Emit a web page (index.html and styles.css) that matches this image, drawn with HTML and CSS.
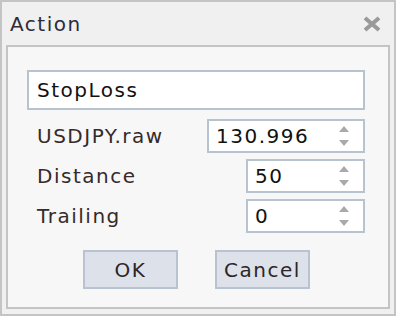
FILE: index.html
```html
<!DOCTYPE html>
<html lang="en">
<head>
    <meta charset="UTF-8">
    <title>Action</title>
    <link rel="stylesheet" href="styles.css">
</head>
<body>
    <div class="window">
        <div class="title-bar">
            <span class="title">Action</span>
            <svg class="close" width="18" height="16" viewBox="0 0 18 16">
                <path d="M2 2 L16 14 M16 2 L2 14" stroke="#999" stroke-width="4"/>
            </svg>
        </div>

        <div class="panel">
            <div class="name-box">StopLoss</div>

            <div class="row">
                <span class="label">USDJPY.raw</span>
                <div class="spin wide">
                    <span>130.996</span>
                    <svg class="arrows" width="14" height="24" viewBox="0 0 14 24">
                        <path d="M7 2 L12 8 L2 8 Z" fill="#aaa"/>
                        <path d="M7 22 L12 16 L2 16 Z" fill="#aaa"/>
                    </svg>
                </div>
            </div>

            <div class="row">
                <span class="label">Distance</span>
                <div class="spin">
                    <span>50</span>
                    <svg class="arrows" width="14" height="24" viewBox="0 0 14 24">
                        <path d="M7 2 L12 8 L2 8 Z" fill="#aaa"/>
                        <path d="M7 22 L12 16 L2 16 Z" fill="#aaa"/>
                    </svg>
                </div>
            </div>

            <div class="row">
                <span class="label">Trailing</span>
                <div class="spin">
                    <span>0</span>
                    <svg class="arrows" width="14" height="24" viewBox="0 0 14 24">
                        <path d="M7 2 L12 8 L2 8 Z" fill="#aaa"/>
                        <path d="M7 22 L12 16 L2 16 Z" fill="#aaa"/>
                    </svg>
                </div>
            </div>

            <div class="buttons">
                <button>OK</button>
                <button>Cancel</button>
            </div>
        </div>
    </div>
</body>
</html>
```

FILE: styles.css
```css
* {
    margin: 0;
    padding: 0;
    box-sizing: border-box;
    font-family: 'DejaVu Sans', Verdana, sans-serif;
}

body {
    background: #f0f0f0;
}

.window {
    width: 396px;
    height: 316px;
    border: 2px solid #c4c4c4;
    background: #f0f0f0;
    display: flex;
    flex-direction: column;
}

.title-bar {
    height: 43px;
    display: flex;
    align-items: center;
    justify-content: space-between;
    padding: 0 13px 0 8px;
}

.title {
    font-size: 20px;
    letter-spacing: 1.5px;
    color: #2b2b3b;
}

.panel {
    flex: 1;
    margin: 0 4px 5px 4px;
    border: 2px solid #c4c4c4;
    background: #f7f7f7;
    padding: 23px 23px 0 19px;
    display: flex;
    flex-direction: column;
}

.name-box {
    height: 40px;
    background: #fff;
    border: 2px solid #b7c3cf;
    padding-left: 8px;
    display: flex;
    align-items: center;
    font-size: 20px;
    letter-spacing: 1.5px;
    color: #111;
    margin-bottom: 9px;
}

.row {
    height: 34px;
    display: flex;
    align-items: center;
    justify-content: space-between;
    margin-bottom: 6px;
}

.label {
    padding-left: 10px;
    font-size: 20px;
    letter-spacing: 1.5px;
    color: #362a2a;
}

.spin {
    width: 119px;
    height: 34px;
    background: #fff;
    border: 2px solid #b7c3cf;
    display: flex;
    align-items: center;
    justify-content: space-between;
    padding: 0 12px 0 7px;
    font-size: 20px;
    letter-spacing: 1.5px;
    color: #111;
}

.spin.wide {
    width: 158px;
}

.buttons {
    display: flex;
    gap: 37px;
    margin-top: 11px;
    padding-left: 56px;
}

button {
    width: 95px;
    height: 39px;
    background: #dde1ea;
    border: 2px solid #b9c3cf;
    font-size: 20px;
    letter-spacing: 1.5px;
    color: #2e2626;
}
```
